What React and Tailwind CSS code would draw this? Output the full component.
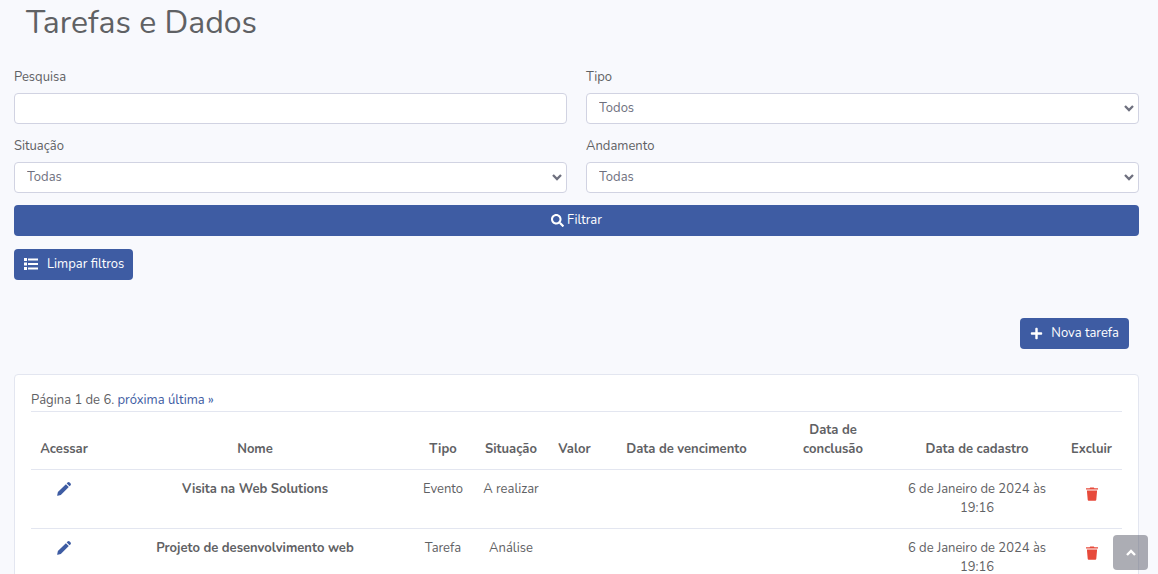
import { useState } from 'react';
import { FaSearch, FaPlus } from 'react-icons/fa';

const tarefas = [
  { id: 1, nome: 'Visita na Web Solutions', tipo: 'Evento', situacao: 'A realizar', cadastro: '6 de Janeiro de 2024 às 19:16' },
  { id: 2, nome: 'Projeto de desenvolvimento web', tipo: 'Tarefa', situacao: 'Análise', cadastro: '6 de Janeiro de 2024 às 19:16' },
];

const columns = [
  { label: 'Acessar', width: 'w-[66px]' },
  { label: 'Nome', width: 'w-auto' },
  { label: 'Tipo', width: 'w-[60px]' },
  { label: 'Situação', width: 'w-[76px]' },
  { label: 'Valor', width: 'w-[51px]' },
  { label: 'Data de vencimento', width: 'w-[173px]' },
  { label: 'Data de conclusão', width: 'w-[120px]' },
  { label: 'Data de cadastro', width: 'w-[168px]' },
  { label: 'Excluir', width: 'w-[61px]' },
];

const fieldClass = 'block h-[31px] w-full rounded border border-[#d1d3e2] bg-white px-3 text-[#6e707e]';
const buttonClass = 'flex h-[31px] items-center rounded bg-[#3e5ca3] text-white hover:bg-[#344e8c]';

function ListIcon() {
  return (
    <svg viewBox="0 0 14 12" className="h-[12px] w-[14px]" fill="currentColor">
      <path d="M0 0h3v3H0zM0 4.5h3v3H0zM0 9h3v3H0zM4 .5h10v2H4zM4 5h10v2H4zM4 9.5h10v2H4z" />
    </svg>
  );
}

function PencilIcon() {
  return (
    <svg viewBox="0 0 14 14" className="h-[14px] w-[14px]" fill="currentColor">
      <path d="M.9 9.9 8.9 2.2l2.9 2.9-8 7.9-3 .8a.5.5 0 0 1-.6-.6z" />
      <path d="M9.7 1.4l.8-.8a1.6 1.6 0 0 1 2.2 0l.7.7a1.6 1.6 0 0 1 0 2.2l-.8.8z" />
    </svg>
  );
}

function TrashIcon() {
  return (
    <svg viewBox="0 0 12 14" className="h-[14px] w-[12px]" fill="currentColor">
      <path d="M0 1.2h3.6L4.2.4h3.6l.6.8H12v1.4H0zM.9 3.6h10.2l-.8 9.2a1 1 0 0 1-1 .9H2.7a1 1 0 0 1-1-.9z" />
    </svg>
  );
}

function SelectField({ id, label, options }) {
  return (
    <div>
      <label htmlFor={id} className="mb-1.5 block">{label}</label>
      <div className="relative">
        <select id={id} className={`${fieldClass} appearance-none`}>
          {options.map((o) => <option key={o}>{o}</option>)}
        </select>
        <svg viewBox="0 0 10 7" className="pointer-events-none absolute top-3 right-[5px] h-[7px] w-[10px]" fill="none" stroke="#6e707e" strokeWidth="2.3">
          <path d="M1 1l4 4 4-4" />
        </svg>
      </div>
    </div>
  );
}

export default function App() {
  const [busca, setBusca] = useState('');

  return (
    <div className="min-h-screen bg-[#f8f9fd] pr-[19px] pb-6 pl-3.5 font-['Nunito','Lato',sans-serif] text-[13px] leading-[19px] text-[#5f6164]">
      <h1 className="pl-3 text-[32px] leading-[46px] font-normal">Tarefas e Dados</h1>

      {/* Filtros */}
      <form onSubmit={(e) => e.preventDefault()} className="pt-[22px]">
        <div className="grid grid-cols-2 gap-x-[19px] gap-y-[13px]">
          <div>
            <label htmlFor="pesquisa" className="mb-1.5 block">Pesquisa</label>
            <input id="pesquisa" type="text" value={busca} onChange={(e) => setBusca(e.target.value)} className={fieldClass} />
          </div>
          <SelectField id="tipo" label="Tipo" options={['Todos', 'Evento', 'Tarefa']} />
          <SelectField id="situacao" label="Situação" options={['Todas', 'A realizar', 'Análise']} />
          <SelectField id="andamento" label="Andamento" options={['Todas']} />
        </div>
        <button type="submit" className={`${buttonClass} mt-3 w-full justify-center gap-[3px] pb-px`}>
          <FaSearch size={13} />
          Filtrar
        </button>
      </form>

      <button type="button" onClick={() => setBusca('')} className={`${buttonClass} mt-[13px] gap-[9px] pr-[9px] pb-px pl-2.5`}>
        <ListIcon />
        Limpar filtros
      </button>

      <div className="flex justify-end pt-[38px] pr-2.5">
        <button type="button" className={`${buttonClass} gap-2 px-2.5 pb-px`}>
          <FaPlus size={13} />
          Nova tarefa
        </button>
      </div>

      {/* Tabela */}
      <div className="mt-[25px] rounded border border-[#e3e6f0] bg-white p-4">
        <p className="pb-px">
          Página 1 de 6.{' '}
          <a href="#proxima" className="text-[#3e5ca3]">próxima</a>{' '}
          <a href="#ultima" className="text-[#3e5ca3]">última »</a>
        </p>
        <table className="w-full table-fixed border-collapse text-center">
          <thead>
            <tr className="h-[58px] border-y border-[#e3e6f0]">
              {columns.map((c) => (
                <th key={c.label} scope="col" className={`${c.width} px-1 pt-2 pb-[10px] align-bottom font-bold ${c.label === 'Data de conclusão' ? 'px-5' : ''}`}>
                  {c.label}
                </th>
              ))}
            </tr>
          </thead>
          <tbody>
            {tarefas.map((t) => (
              <tr key={t.id} className="border-b border-[#e3e6f0] align-top">
                <td className="py-3">
                  <a href="#editar" aria-label={`Acessar ${t.nome}`} className="flex justify-center text-[#3e5ca3]">
                    <PencilIcon />
                  </a>
                </td>
                <td className="px-3 py-2.5 font-bold">{t.nome}</td>
                <td className="py-2.5">{t.tipo}</td>
                <td className="py-2.5">{t.situacao}</td>
                <td />
                <td />
                <td />
                <td className="px-3 py-2.5">{t.cadastro}</td>
                <td className="py-[17px]">
                  <button type="button" aria-label={`Excluir ${t.nome}`} className="mx-auto flex text-[#e74a3b]">
                    <TrashIcon />
                  </button>
                </td>
              </tr>
            ))}
          </tbody>
        </table>
      </div>

      <a href="#topo" aria-label="Voltar ao topo" className="fixed right-2.5 bottom-1 flex size-[35px] items-center justify-center rounded bg-[#5a5c69]/50 text-white">
        <svg viewBox="0 0 10 7" className="h-[7px] w-[10px]" fill="none" stroke="currentColor" strokeWidth="2.4">
          <path d="M1 6l4-4 4 4" />
        </svg>
      </a>
    </div>
  );
}
